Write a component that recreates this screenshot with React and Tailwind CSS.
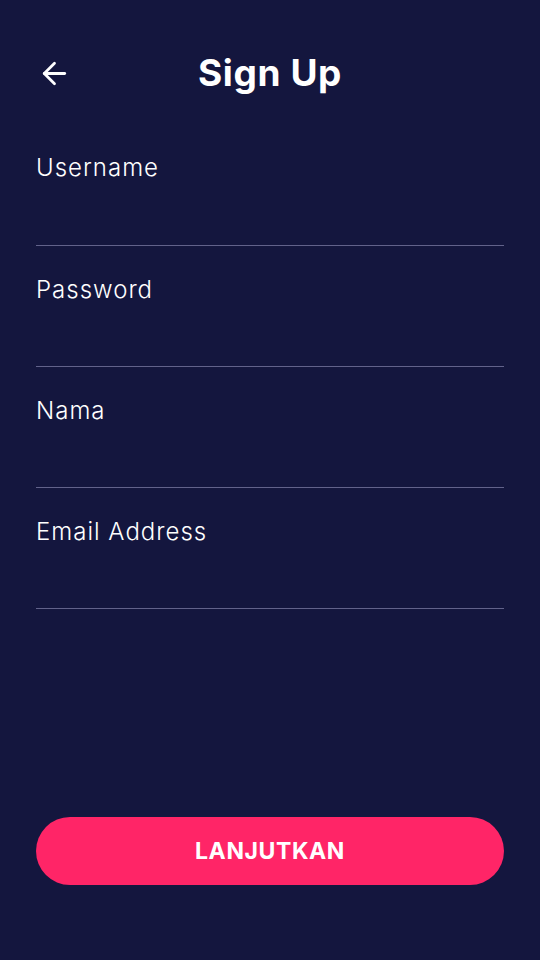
import { ArrowLeft } from 'lucide-react'

const fields = ['Username', 'Password', 'Nama', 'Email Address']

export default function App() {
  return (
    <div className="w-[540px] h-[960px] bg-[#14163e] text-white flex flex-col" style={{ fontFamily: 'Inter, "Open Sans", sans-serif' }}>
      <div className="relative h-[146px] flex items-start justify-center pt-[49px]">
        <button className="absolute left-[37px] top-[56px] text-white">
          <ArrowLeft size={35} strokeWidth={1.9} />
        </button>
        <h1 className="text-[37px] font-bold leading-[48px] tracking-[0.6px]">Sign Up</h1>
      </div>
      <div className="px-9 flex flex-col">
        {fields.map((f, i) => (
          <div key={f} className={`${i === 0 ? 'h-[100px] pt-[6px]' : 'h-[121px] pt-[28px]'} border-b border-[#62628a]`}>
            <label className="block text-[24px] font-light leading-[32px] tracking-[1px]">{f}</label>
          </div>
        ))}
      </div>
      <div className="flex-1" />
      <div className="px-9 pb-[75px]">
        <button className="w-full h-[68px] rounded-full bg-[#ff2567] text-white text-[23px] font-bold tracking-[0.6px]">
          LANJUTKAN
        </button>
      </div>
    </div>
  )
}
